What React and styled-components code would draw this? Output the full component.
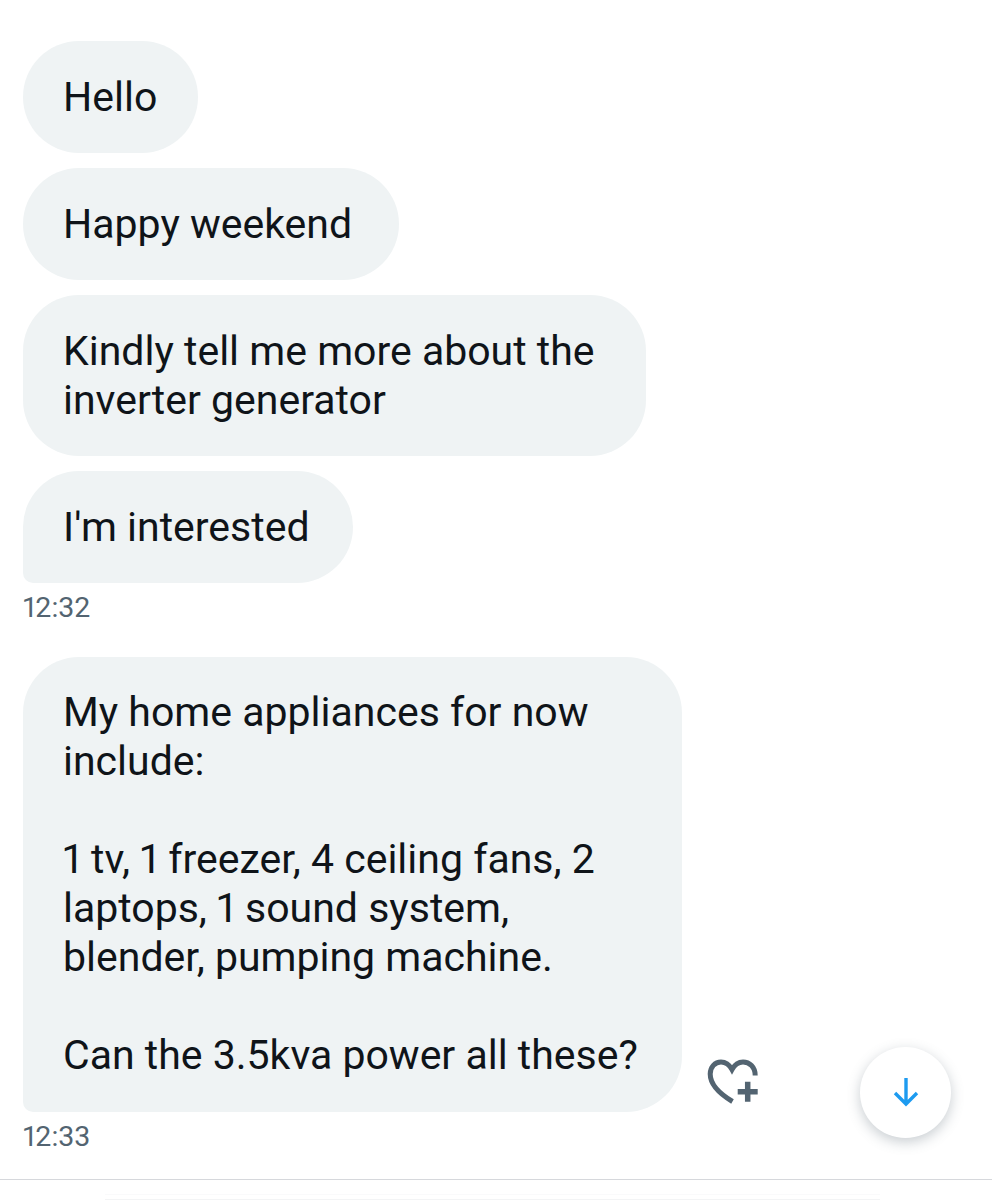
import React from "react";
import styled, { createGlobalStyle } from "styled-components";

const GlobalStyle = createGlobalStyle`
  html, body {
    margin: 0;
    padding: 0;
    background: #fff;
  }
  body {
    font-family: Roboto, "Liberation Sans", sans-serif;
    font-variant-numeric: proportional-nums;
  }
`;

const Page = styled.div`
  position: relative;
  box-sizing: border-box;
  width: 992px;
  height: 1200px;
  padding: 41px 0 0 23px;
  overflow: hidden;
  background: #fff;
`;

const Group = styled.div`
  display: flex;
  flex-direction: column;
  align-items: flex-start;
  gap: 15px;
`;

const Row = styled.div`
  display: flex;
  align-items: flex-end;
`;

const Bubble = styled.div`
  box-sizing: border-box;
  width: ${(p) => p.$width}px;
  padding: ${(p) => (p.$long ? "31px 0 32px 40px" : "31.5px 0 31.5px 40px")};
  border-radius: ${(p) => (p.$last ? "56px 56px 56px 10px" : "56px")};
  background: #eff3f4;
  color: #0f1419;
  font-size: 41px;
  line-height: 49px;
  white-space: pre-line;
`;

const Time = styled.div`
  margin: 8px 0 ${(p) => p.$gap || 0}px;
  color: #536471;
  font-size: 28.5px;
  line-height: 34px;
`;

const ReactButton = styled.div`
  display: flex;
  margin: 0 0 8px 25px;
  color: #536471;
`;

const ScrollButton = styled.div`
  position: absolute;
  left: 860px;
  top: 1047px;
  display: flex;
  align-items: center;
  justify-content: center;
  width: 91px;
  height: 91px;
  border-radius: 50%;
  background: #fff;
  color: #1d9bf0;
  box-shadow: 0 4px 13px rgba(83, 100, 113, 0.32);
`;

const Divider = styled.div`
  position: absolute;
  left: 0;
  right: 0;
  top: 1179px;
  height: 1px;
  background: #d6d8dc;
`;

const ComposerEdge = styled.div`
  position: absolute;
  left: 105px;
  top: 1194px;
  box-sizing: border-box;
  width: 775px;
  height: 6px;
  border-top: 1px solid #fafafb;
  border-bottom: 1px solid #f3f4f5;
`;

function HeartPlus() {
  return (
    <svg width="52" height="46" viewBox="0 0 52 46" fill="none">
      <path
        d="M48.2 17.5 C48.2 9 42.5 4 36 4 C31.5 4 27.5 7 25 11.5 C22.5 7 18.5 4 14 4 C8 4 3.2 9 3.2 16 C3.2 26 13 36 25.5 43.5"
        stroke="currentColor"
        strokeWidth="5"
      />
      <path d="M40.7 23.7 V43.7 M30.7 33.7 H50.7" stroke="currentColor" strokeWidth="5.5" />
    </svg>
  );
}

function ArrowDown() {
  return (
    <svg width="26" height="30" viewBox="0 0 26 30" fill="none">
      <path
        d="M13 0 V26 M2 15 L13 26 L24 15"
        stroke="currentColor"
        strokeWidth="3.4"
      />
    </svg>
  );
}

export default function App() {
  return (
    <Page>
      <GlobalStyle />
      <Group>
        <Bubble $width={175}>Hello</Bubble>
        <Bubble $width={376}>Happy weekend</Bubble>
        <Bubble $width={623}>{"Kindly tell me more about the\ninverter generator"}</Bubble>
        <Bubble $last $width={330}>I'm interested</Bubble>
      </Group>
      <Time $gap={32}>12:32</Time>
      <Row>
        <Bubble $last $long $width={659}>
          {
            "My home appliances for now\ninclude:\n\n1 tv, 1 freezer, 4 ceiling fans, 2\nlaptops, 1 sound system,\nblender, pumping machine.\n\nCan the 3.5kva power all these?"
          }
        </Bubble>
        <ReactButton>
          <HeartPlus />
        </ReactButton>
      </Row>
      <Time>12:33</Time>
      <ScrollButton>
        <ArrowDown />
      </ScrollButton>
      <Divider />
      <ComposerEdge />
    </Page>
  );
}
